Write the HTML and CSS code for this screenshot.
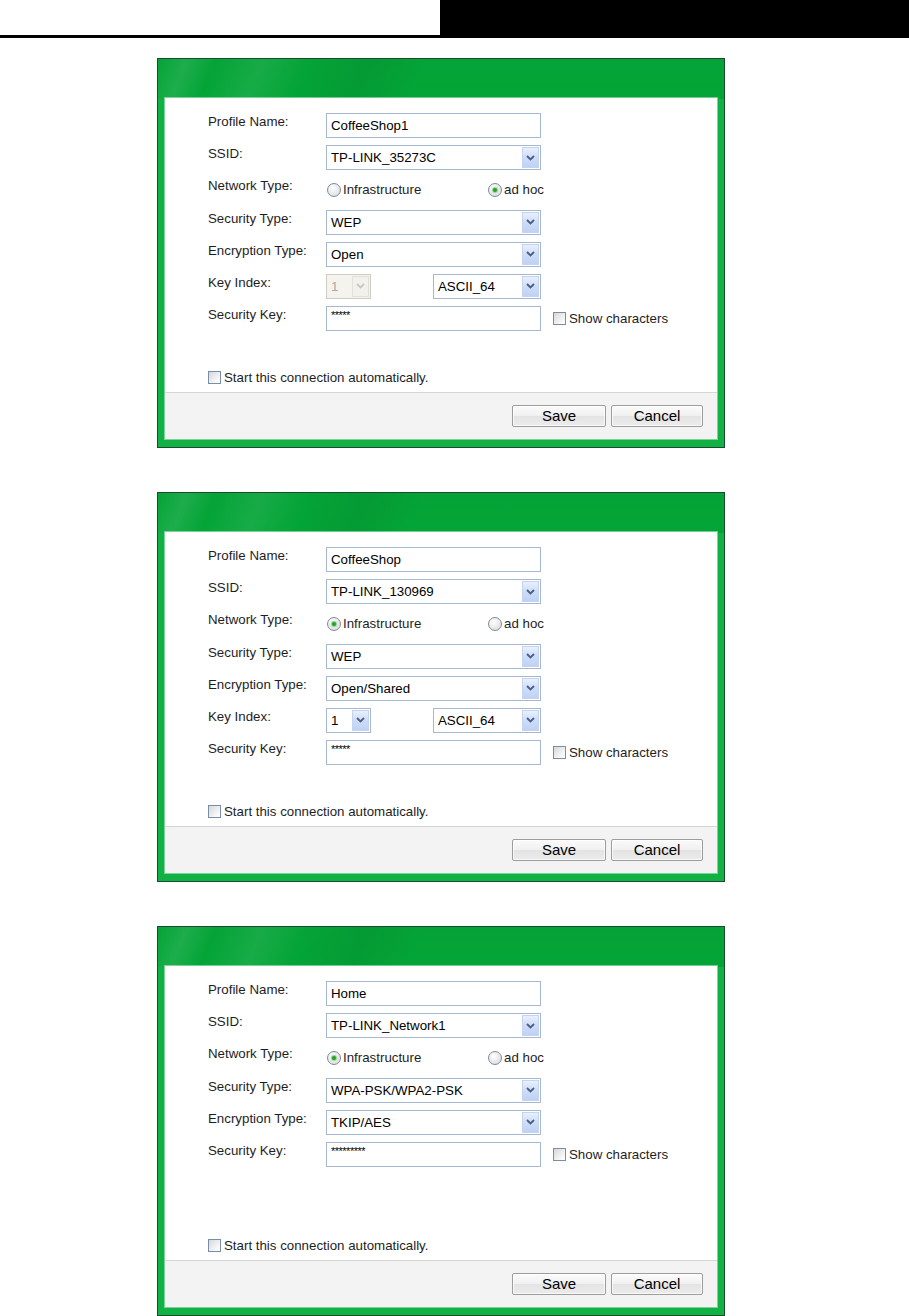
FILE: index.html
```html
<!DOCTYPE html>
<html lang="en">
<head>
    <meta charset="UTF-8">
    <title>Profile Settings</title>
    <link rel="stylesheet" href="styles.css">
</head>
<body>

<div class="page-top">
    <div class="top-left"></div>
    <div class="top-right"></div>
</div>

<!-- ad hoc profile -->
<div class="dialog">
    <div class="panel">
        <div class="form">
            <div class="row">
                <span class="label">Profile Name:</span>
                <div class="field">CoffeeShop1</div>
            </div>
            <div class="row">
                <span class="label">SSID:</span>
                <div class="field select"><span>TP-LINK_35273C</span><i class="drop"><svg width="9" height="6" viewBox="0 0 9 6"><path d="M1 1 L4.5 4.5 L8 1" fill="none" stroke="#4c5f82" stroke-width="1.8"/></svg></i></div>
            </div>
            <div class="row">
                <span class="label">Network Type:</span>
                <div class="radios">
                    <span class="opt"><i class="radio"></i>Infrastructure</span>
                    <span class="opt"><i class="radio on"></i>ad hoc</span>
                </div>
            </div>
            <div class="row">
                <span class="label">Security Type:</span>
                <div class="field select"><span>WEP</span><i class="drop"><svg width="9" height="6" viewBox="0 0 9 6"><path d="M1 1 L4.5 4.5 L8 1" fill="none" stroke="#4c5f82" stroke-width="1.8"/></svg></i></div>
            </div>
            <div class="row">
                <span class="label">Encryption Type:</span>
                <div class="field select"><span>Open</span><i class="drop"><svg width="9" height="6" viewBox="0 0 9 6"><path d="M1 1 L4.5 4.5 L8 1" fill="none" stroke="#4c5f82" stroke-width="1.8"/></svg></i></div>
            </div>
            <div class="row">
                <span class="label">Key Index:</span>
                <div class="field select small disabled"><span>1</span><i class="drop"><svg width="9" height="6" viewBox="0 0 9 6"><path d="M1 1 L4.5 4.5 L8 1" fill="none" stroke="#c9c8bf" stroke-width="1.8"/></svg></i></div>
                <div class="field select format"><span>ASCII_64</span><i class="drop"><svg width="9" height="6" viewBox="0 0 9 6"><path d="M1 1 L4.5 4.5 L8 1" fill="none" stroke="#4c5f82" stroke-width="1.8"/></svg></i></div>
            </div>
            <div class="row">
                <span class="label">Security Key:</span>
                <div class="field key">*****</div>
                <span class="show"><i class="check"></i>Show characters</span>
            </div>
            <span class="auto"><i class="check"></i>Start this connection automatically.</span>
        </div>
        <div class="footer">
            <button class="save">Save</button>
            <button class="cancel">Cancel</button>
        </div>
    </div>
</div>

<!-- infrastructure, WEP -->
<div class="dialog">
    <div class="panel">
        <div class="form">
            <div class="row">
                <span class="label">Profile Name:</span>
                <div class="field">CoffeeShop</div>
            </div>
            <div class="row">
                <span class="label">SSID:</span>
                <div class="field select"><span>TP-LINK_130969</span><i class="drop"><svg width="9" height="6" viewBox="0 0 9 6"><path d="M1 1 L4.5 4.5 L8 1" fill="none" stroke="#4c5f82" stroke-width="1.8"/></svg></i></div>
            </div>
            <div class="row">
                <span class="label">Network Type:</span>
                <div class="radios">
                    <span class="opt"><i class="radio on"></i>Infrastructure</span>
                    <span class="opt"><i class="radio"></i>ad hoc</span>
                </div>
            </div>
            <div class="row">
                <span class="label">Security Type:</span>
                <div class="field select"><span>WEP</span><i class="drop"><svg width="9" height="6" viewBox="0 0 9 6"><path d="M1 1 L4.5 4.5 L8 1" fill="none" stroke="#4c5f82" stroke-width="1.8"/></svg></i></div>
            </div>
            <div class="row">
                <span class="label">Encryption Type:</span>
                <div class="field select"><span>Open/Shared</span><i class="drop"><svg width="9" height="6" viewBox="0 0 9 6"><path d="M1 1 L4.5 4.5 L8 1" fill="none" stroke="#4c5f82" stroke-width="1.8"/></svg></i></div>
            </div>
            <div class="row">
                <span class="label">Key Index:</span>
                <div class="field select small"><span>1</span><i class="drop"><svg width="9" height="6" viewBox="0 0 9 6"><path d="M1 1 L4.5 4.5 L8 1" fill="none" stroke="#4c5f82" stroke-width="1.8"/></svg></i></div>
                <div class="field select format"><span>ASCII_64</span><i class="drop"><svg width="9" height="6" viewBox="0 0 9 6"><path d="M1 1 L4.5 4.5 L8 1" fill="none" stroke="#4c5f82" stroke-width="1.8"/></svg></i></div>
            </div>
            <div class="row">
                <span class="label">Security Key:</span>
                <div class="field key">*****</div>
                <span class="show"><i class="check"></i>Show characters</span>
            </div>
            <span class="auto"><i class="check"></i>Start this connection automatically.</span>
        </div>
        <div class="footer">
            <button class="save">Save</button>
            <button class="cancel">Cancel</button>
        </div>
    </div>
</div>

<!-- infrastructure, WPA -->
<div class="dialog">
    <div class="panel">
        <div class="form">
            <div class="row">
                <span class="label">Profile Name:</span>
                <div class="field">Home</div>
            </div>
            <div class="row">
                <span class="label">SSID:</span>
                <div class="field select"><span>TP-LINK_Network1</span><i class="drop"><svg width="9" height="6" viewBox="0 0 9 6"><path d="M1 1 L4.5 4.5 L8 1" fill="none" stroke="#4c5f82" stroke-width="1.8"/></svg></i></div>
            </div>
            <div class="row">
                <span class="label">Network Type:</span>
                <div class="radios">
                    <span class="opt"><i class="radio on"></i>Infrastructure</span>
                    <span class="opt"><i class="radio"></i>ad hoc</span>
                </div>
            </div>
            <div class="row">
                <span class="label">Security Type:</span>
                <div class="field select"><span>WPA-PSK/WPA2-PSK</span><i class="drop"><svg width="9" height="6" viewBox="0 0 9 6"><path d="M1 1 L4.5 4.5 L8 1" fill="none" stroke="#4c5f82" stroke-width="1.8"/></svg></i></div>
            </div>
            <div class="row">
                <span class="label">Encryption Type:</span>
                <div class="field select"><span>TKIP/AES</span><i class="drop"><svg width="9" height="6" viewBox="0 0 9 6"><path d="M1 1 L4.5 4.5 L8 1" fill="none" stroke="#4c5f82" stroke-width="1.8"/></svg></i></div>
            </div>
            <div class="row">
                <span class="label">Security Key:</span>
                <div class="field key">*********</div>
                <span class="show"><i class="check"></i>Show characters</span>
            </div>
            <span class="auto"><i class="check"></i>Start this connection automatically.</span>
        </div>
        <div class="footer">
            <button class="save">Save</button>
            <button class="cancel">Cancel</button>
        </div>
    </div>
</div>

</body>
</html>
```

FILE: styles.css
```css
body {
    margin: 0;
    background: #fff;
    font-family: "Liberation Sans", Arial, sans-serif;
    font-size: 13.3px;
    color: #000;
}
.page-top {
    display: flex;
    height: 38px;
    margin-bottom: 20px;
}
.top-left {
    width: 440px;
    border-bottom: 3px solid #000;
}
.top-right {
    flex: 1;
    background: #000;
}

/* dialog frame */
.dialog {
    box-sizing: border-box;
    width: 568px;
    height: 390px;
    margin: 0 0 44px 157px;
    padding: 39px 7px 8px 7px;
    border: 1px solid #1b4a30;
    background:
        linear-gradient(112deg, rgba(255,255,255,0) 0%, rgba(255,255,255,.1) 5%, rgba(255,255,255,0) 10%, rgba(255,255,255,.08) 18%, rgba(255,255,255,0) 26%, rgba(0,0,0,.06) 36%, rgba(0,0,0,0) 46%) top left / 100% 40px no-repeat,
        linear-gradient(#05a337, #03a537) top left / 100% 40px no-repeat,
        #11b144;
}
.panel {
    height: 100%;
    display: flex;
    flex-direction: column;
    background: #fff;
    box-shadow: 0 0 0 1px rgba(255,255,255,.45);
}
.form {
    flex: 1;
    display: flex;
    flex-direction: column;
    gap: 7.2px;
    padding: 15px 0 0 43px;
}
.row {
    display: flex;
    align-items: center;
    height: 25px;
}
.label {
    width: 118px;
    flex: none;
    color: #1e1e1e;
    margin-top: -8px;
}

/* text boxes and drop downs */
.field {
    box-sizing: border-box;
    width: 215px;
    height: 25px;
    border: 1px solid #a5b8cf;
    background: #fff;
    padding-left: 4px;
    line-height: 23px;
    display: flex;
    align-items: center;
}
.select span {
    flex: 1;
}
.drop {
    width: 17px;
    height: 21px;
    margin-right: 1px;
    display: flex;
    align-items: center;
    justify-content: center;
    background: linear-gradient(#e9f0fd, #cddcf8 50%, #bfd2f5);
    border: 1px solid #c4d3ef;
    box-sizing: border-box;
}
.small {
    width: 45px;
}
.format {
    width: 108px;
    margin-left: 62px;
}
.disabled {
    background: #f4f3ee;
    border-color: #cfcdc3;
    color: #aca99c;
}
.disabled .drop {
    background: #f2f1ec;
    border-color: #e2e0d8;
}
.key {
    font-size: 11px;
    align-items: flex-start;
    line-height: 16px;
    letter-spacing: -0.5px;
}

/* radios and checkboxes */
.radios {
    display: flex;
    align-items: center;
}
.opt {
    display: flex;
    align-items: center;
    width: 161px;
    color: #1e1e1e;
}
.opt + .opt {
    width: 57px;
    overflow: hidden;
    white-space: nowrap;
}
.radio {
    box-sizing: border-box;
    width: 14px;
    height: 14px;
    margin: 0 2px 0 1px;
    border: 1px solid #7d8ca0;
    border-radius: 50%;
    background: radial-gradient(circle at 40% 35%, #fff, #e2e2e2 70%, #d0d0d0);
    display: flex;
    align-items: center;
    justify-content: center;
    flex: none;
}
.radio.on::after {
    content: "";
    width: 4px;
    height: 4px;
    border-radius: 50%;
    background: #2b9d2b;
    box-shadow: 0 0 1px 1px #8ed08e;
}
.check {
    box-sizing: border-box;
    width: 13px;
    height: 13px;
    border: 1px solid #7a8da7;
    background: linear-gradient(135deg, #d7d7d7, #f6f6f6 70%, #fff);
    margin-right: 3px;
    flex: none;
}
.show {
    display: flex;
    align-items: center;
    margin-left: 12px;
    color: #1e1e1e;
}
.auto {
    display: flex;
    align-items: center;
    height: 15px;
    margin-top: auto;
    margin-bottom: 7px;
    color: #1e1e1e;
}

/* button bar */
.footer {
    box-sizing: border-box;
    height: 47px;
    border-top: 1px solid #d6d6d6;
    background: #f3f3f3;
    display: flex;
    justify-content: flex-end;
    align-items: center;
    gap: 5px;
    padding: 0 14px 1px 0;
}
button {
    height: 22px;
    font-family: "Liberation Sans", Arial, sans-serif;
    font-size: 15px;
    color: #000;
    border: 1px solid #9d9d9d;
    border-radius: 2px;
    background: linear-gradient(#fbfbfb, #f0f0f0 50%, #e3e3e3 51%, #ececec);
    box-shadow: inset 0 0 0 1px rgba(255,255,255,.7);
    padding: 0;
}
.save {
    width: 94px;
}
.cancel {
    width: 92px;
}
```
